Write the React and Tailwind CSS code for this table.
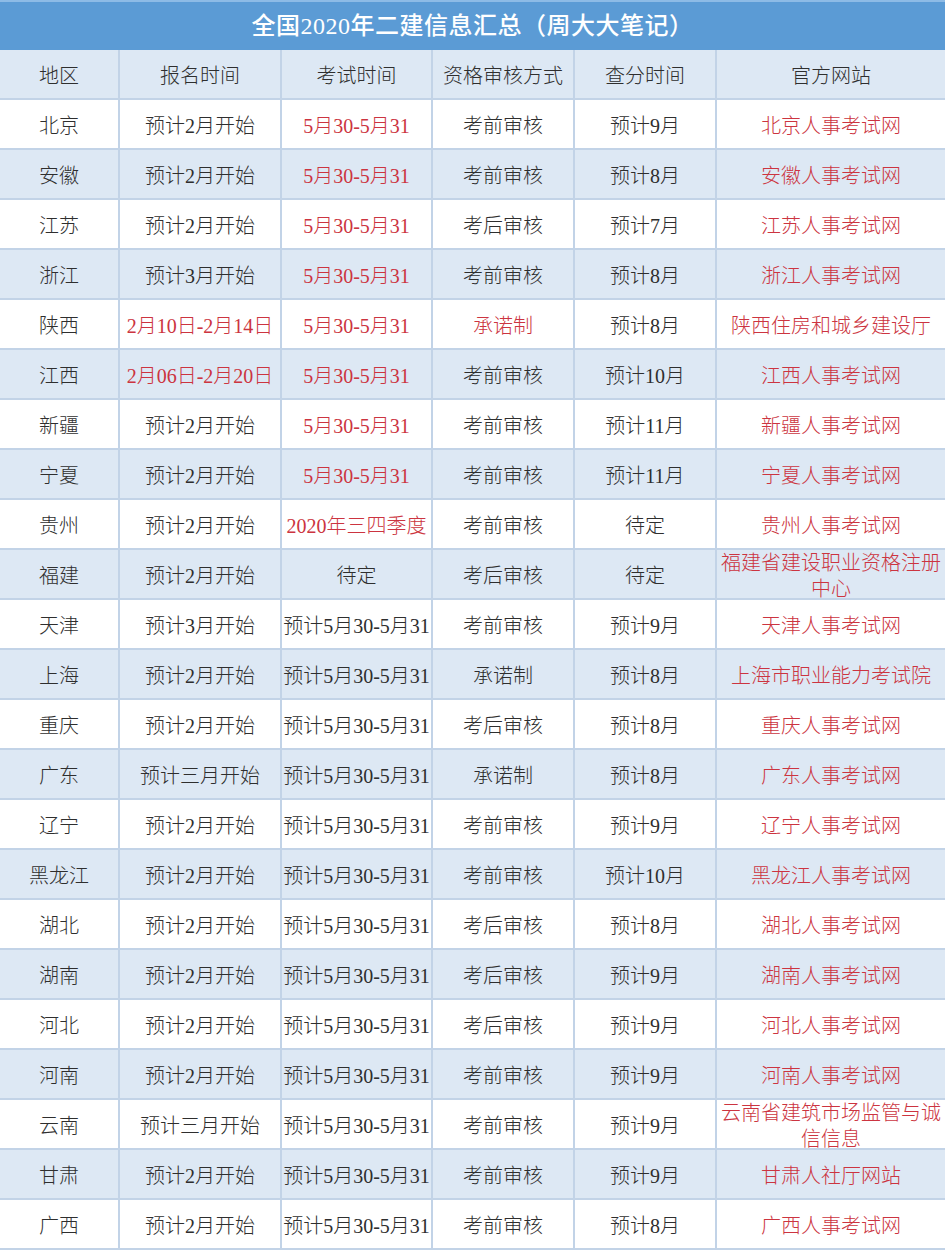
const rows = [
  ["北京", "预计2月开始", "5月30-5月31", "考前审核", "预计9月", "北京人事考试网", 0, 1, 0],
  ["安徽", "预计2月开始", "5月30-5月31", "考前审核", "预计8月", "安徽人事考试网", 0, 1, 0],
  ["江苏", "预计2月开始", "5月30-5月31", "考后审核", "预计7月", "江苏人事考试网", 0, 1, 0],
  ["浙江", "预计3月开始", "5月30-5月31", "考前审核", "预计8月", "浙江人事考试网", 0, 1, 0],
  ["陕西", "2月10日-2月14日", "5月30-5月31", "承诺制", "预计8月", "陕西住房和城乡建设厅", 1, 1, 1],
  ["江西", "2月06日-2月20日", "5月30-5月31", "考前审核", "预计10月", "江西人事考试网", 1, 1, 0],
  ["新疆", "预计2月开始", "5月30-5月31", "考前审核", "预计11月", "新疆人事考试网", 0, 1, 0],
  ["宁夏", "预计2月开始", "5月30-5月31", "考前审核", "预计11月", "宁夏人事考试网", 0, 1, 0],
  ["贵州", "预计2月开始", "2020年三四季度", "考前审核", "待定", "贵州人事考试网", 0, 1, 0],
  ["福建", "预计2月开始", "待定", "考后审核", "待定", "福建省建设职业资格注册中心", 0, 0, 0],
  ["天津", "预计3月开始", "预计5月30-5月31", "考前审核", "预计9月", "天津人事考试网", 0, 0, 0],
  ["上海", "预计2月开始", "预计5月30-5月31", "承诺制", "预计8月", "上海市职业能力考试院", 0, 0, 0],
  ["重庆", "预计2月开始", "预计5月30-5月31", "考后审核", "预计8月", "重庆人事考试网", 0, 0, 0],
  ["广东", "预计三月开始", "预计5月30-5月31", "承诺制", "预计8月", "广东人事考试网", 0, 0, 0],
  ["辽宁", "预计2月开始", "预计5月30-5月31", "考前审核", "预计9月", "辽宁人事考试网", 0, 0, 0],
  ["黑龙江", "预计2月开始", "预计5月30-5月31", "考前审核", "预计10月", "黑龙江人事考试网", 0, 0, 0],
  ["湖北", "预计2月开始", "预计5月30-5月31", "考后审核", "预计8月", "湖北人事考试网", 0, 0, 0],
  ["湖南", "预计2月开始", "预计5月30-5月31", "考后审核", "预计9月", "湖南人事考试网", 0, 0, 0],
  ["河北", "预计2月开始", "预计5月30-5月31", "考后审核", "预计9月", "河北人事考试网", 0, 0, 0],
  ["河南", "预计2月开始", "预计5月30-5月31", "考前审核", "预计9月", "河南人事考试网", 0, 0, 0],
  ["云南", "预计三月开始", "预计5月30-5月31", "考前审核", "预计9月", "云南省建筑市场监管与诚信信息", 0, 0, 0],
  ["甘肃", "预计2月开始", "预计5月30-5月31", "考前审核", "预计9月", "甘肃人社厅网站", 0, 0, 0],
  ["广西", "预计2月开始", "预计5月30-5月31", "考前审核", "预计8月", "广西人事考试网", 0, 0, 0],
];

const headers = ["地区", "报名时间", "考试时间", "资格审核方式", "查分时间", "官方网站"];

const font = { fontFamily: '"Liberation Serif", "Noto Sans CJK SC", serif' };

function Cell({ children, red, last, blue }) {
  return (
    <div
      className={`h-[50px] flex items-center justify-center text-center text-[20px] leading-[26px] font-light border-b-2 border-[#c2d3e7] ${last ? "" : "border-r-2"} ${blue ? "bg-[#dde8f4]" : "bg-white"} ${red ? "text-[#cc3440]" : "text-[#2e2e2e]"} px-[2px] pt-[3px] overflow-hidden`}
    >
      <span className={last ? "" : "whitespace-nowrap"}>{children}</span>
    </div>
  );
}

export default function App() {
  return (
    <div className="w-[945px] h-[1251px] bg-white overflow-hidden" style={font}>
      <div className="h-[50px] bg-[#5b9bd5] border-t-2 border-[#8dbbe6] flex items-center justify-center text-white text-[24px] font-medium tracking-[0.5px]">
        全国2020年二建信息汇总（周大大笔记）
      </div>
      <div className="grid grid-cols-[120px_162px_151px_142px_142px_228px]">
        {headers.map((h, i) => (
          <Cell key={h} blue last={i === 5}>{h}</Cell>
        ))}
        {rows.map((r, ri) => {
          const blue = ri % 2 === 1;
          return [
            <Cell key={ri + "a"} blue={blue}>{r[0]}</Cell>,
            <Cell key={ri + "b"} blue={blue} red={r[6]}>{r[1]}</Cell>,
            <Cell key={ri + "c"} blue={blue} red={r[7]}>{r[2]}</Cell>,
            <Cell key={ri + "d"} blue={blue} red={r[8]}>{r[3]}</Cell>,
            <Cell key={ri + "e"} blue={blue}>{r[4]}</Cell>,
            <Cell key={ri + "f"} blue={blue} red last>{r[5]}</Cell>,
          ];
        })}
      </div>
    </div>
  );
}
